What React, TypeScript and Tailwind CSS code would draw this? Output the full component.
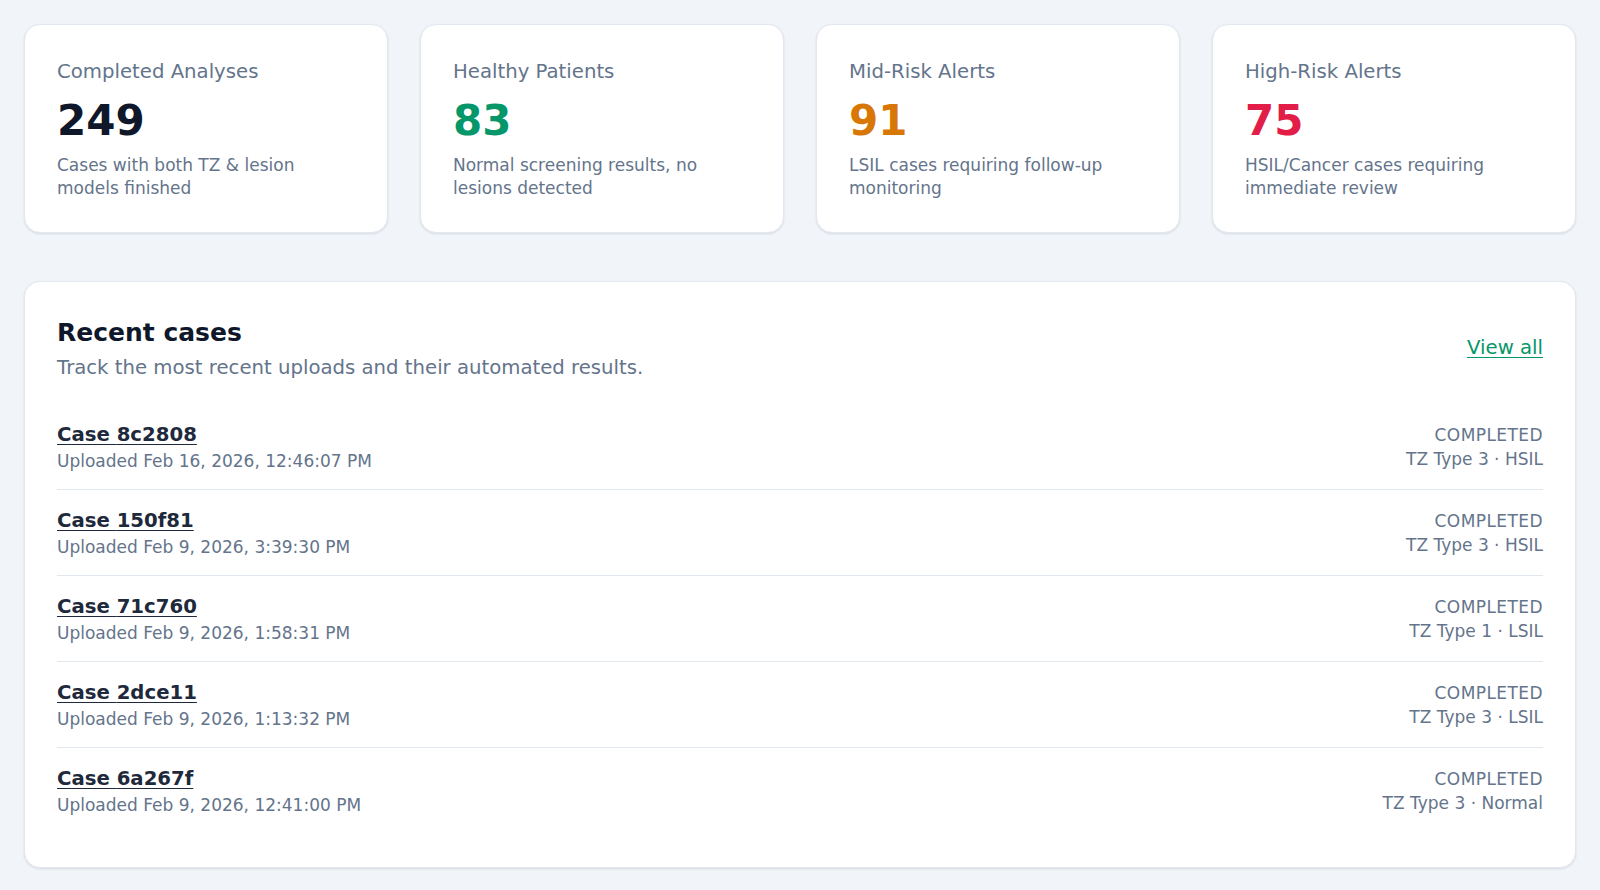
import React from "react";

const stats = [
  { title: "Completed Analyses", value: "249", color: "text-[#0f172a]", desc: "Cases with both TZ & lesion models finished" },
  { title: "Healthy Patients", value: "83", color: "text-[#059669]", desc: "Normal screening results, no lesions detected" },
  { title: "Mid-Risk Alerts", value: "91", color: "text-[#d97706]", desc: "LSIL cases requiring follow-up monitoring" },
  { title: "High-Risk Alerts", value: "75", color: "text-[#e11d48]", desc: "HSIL/Cancer cases requiring immediate review" },
];

const cases = [
  { id: "8c2808", date: "Uploaded Feb 16, 2026, 12:46:07 PM", result: "TZ Type 3 · HSIL" },
  { id: "150f81", date: "Uploaded Feb 9, 2026, 3:39:30 PM", result: "TZ Type 3 · HSIL" },
  { id: "71c760", date: "Uploaded Feb 9, 2026, 1:58:31 PM", result: "TZ Type 1 · LSIL" },
  { id: "2dce11", date: "Uploaded Feb 9, 2026, 1:13:32 PM", result: "TZ Type 3 · LSIL" },
  { id: "6a267f", date: "Uploaded Feb 9, 2026, 12:41:00 PM", result: "TZ Type 3 · Normal" },
];

export default function App() {
  return (
    <div
      className="min-h-[890px] w-full bg-[#f1f5f9] p-6"
      style={{ fontFamily: '"DejaVu Sans", Verdana, sans-serif' }}
    >
      <div className="grid grid-cols-4 gap-8">
        {stats.map((s) => (
          <div
            key={s.title}
            className="rounded-2xl border border-[#e2e8f0] bg-white px-8 pt-[33px] pb-[33px] shadow-[0_1px_3px_rgba(15,23,42,0.08),0_1px_2px_rgba(15,23,42,0.04)]"
          >
            <div className="text-[19.7px] leading-[28px] text-[#64748b]">{s.title}</div>
            <div className={`mt-[14px] text-[42px] font-bold leading-none ${s.color}`}>{s.value}</div>
            <div className="mt-[12px] text-[17px] leading-[22.5px] text-[#64748b]">{s.desc}</div>
          </div>
        ))}
      </div>

      <div className="mt-12 rounded-2xl border border-[#e2e8f0] bg-white px-8 pt-8 pb-[34px] shadow-[0_1px_3px_rgba(15,23,42,0.08),0_1px_2px_rgba(15,23,42,0.04)]">
        <div className="flex items-center justify-between">
          <div>
            <h2 className="text-[25px] font-bold leading-[37.5px] text-[#0f172a]">Recent cases</h2>
            <p className="mt-[2px] text-[19.7px] leading-[28px] text-[#64748b]">
              Track the most recent uploads and their automated results.
            </p>
          </div>
          <a href="#" className="text-[19.7px] leading-[28px] text-[#059669] underline underline-offset-[3px]">
            View all
          </a>
        </div>

        <div className="mt-[22px] flex flex-col">
          {cases.map((c, i) => (
            <div
              key={c.id}
              className={`flex items-center justify-between pt-[17px] pb-[16px] ${i < cases.length - 1 ? "border-b border-[#e2e8f0]" : ""}`}
            >
              <div className="flex flex-col">
                <a href="#" className="text-[19.7px] font-bold leading-[28px] text-[#1e293b] underline underline-offset-[3px]">
                  Case {c.id}
                </a>
                <span className="text-[17px] leading-[24px] text-[#64748b]">{c.date}</span>
              </div>
              <div className="flex flex-col items-end text-[17px] leading-[24px] text-[#64748b]">
                <span className="tracking-[0.025em]">COMPLETED</span>
                <span>{c.result}</span>
              </div>
            </div>
          ))}
        </div>
      </div>
    </div>
  );
}
